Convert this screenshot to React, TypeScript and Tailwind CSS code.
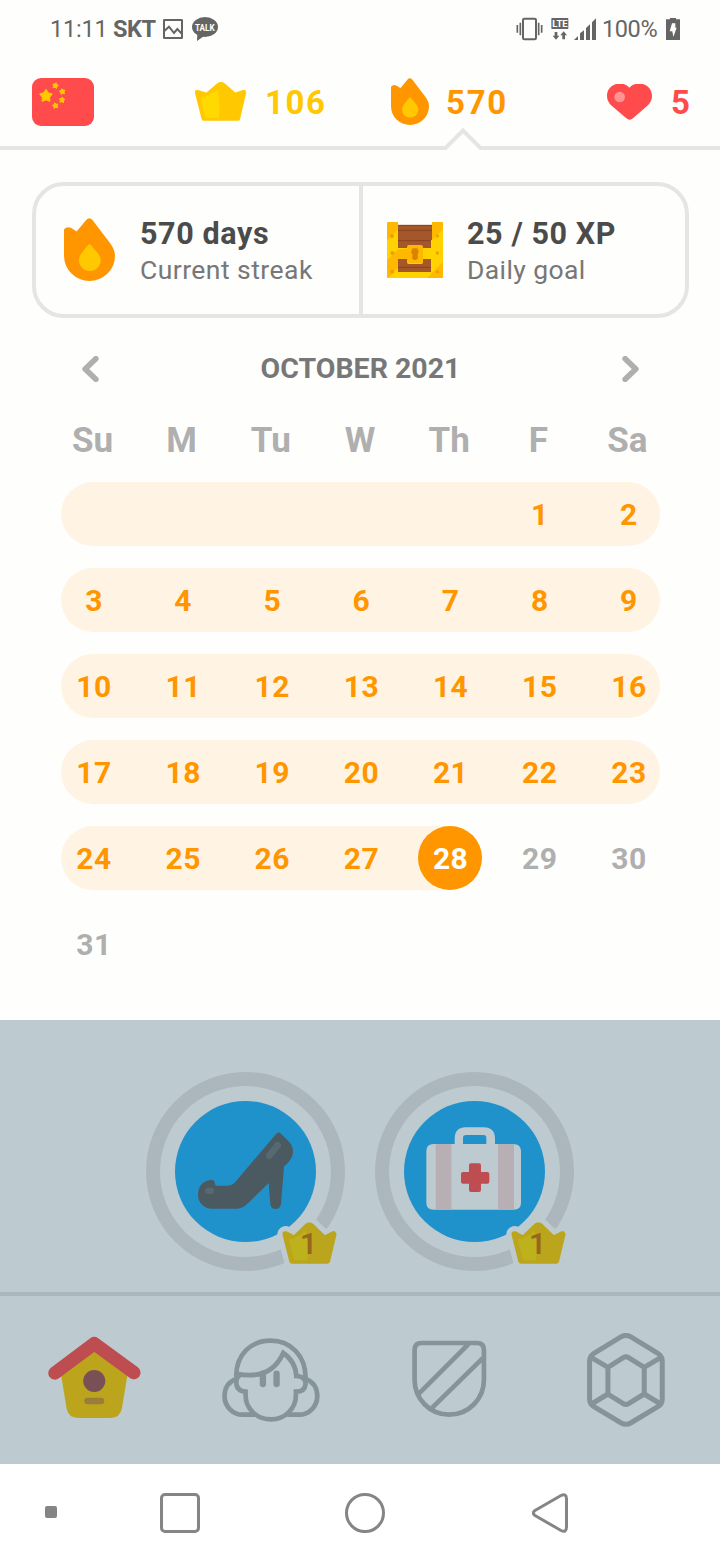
import React from "react";

const streakWeeks: (number | null)[][] = [
  [null, null, null, null, null, 1, 2],
  [3, 4, 5, 6, 7, 8, 9],
  [10, 11, 12, 13, 14, 15, 16],
  [17, 18, 19, 20, 21, 22, 23],
];
const weekdays = ["Su", "M", "Tu", "W", "Th", "F", "Sa"];

function Flame({ className }: { className: string }) {
  return (
    <svg className={className} viewBox="132 143 154 190" preserveAspectRatio="none">
      <path
        fill="#ff9600"
        d="M132 178Q136 171 146 171Q153 171 170 184L199 149Q208 139 218 149L272 220Q286 240 286 257A77 76 0 0 1 132 257Z"
      />
      <path
        fill="#ffc800"
        d="M204 225Q209 219 214 225L235 250Q243 261 243 270A33 33 0 0 1 177 270Q177 261 184 250Z"
      />
    </svg>
  );
}

function star(cx: number, cy: number, r: number, turn: number) {
  return Array.from({ length: 10 }, (_, i) => {
    const a = ((i * 36 - 90 + turn) * Math.PI) / 180;
    const d = i % 2 ? r * 0.58 : r;
    return `${cx + d * Math.cos(a)},${cy + d * Math.sin(a)}`;
  }).join(" ");
}

function StatusBar() {
  return (
    <div className="flex h-14 shrink-0 items-center pl-[50px] pr-10 pt-[2px] text-[#656565]">
      <span className="w-[63px] text-[23.5px] leading-7 tracking-[-0.2px]">11:11</span>
      <span className="w-[49px] text-[23.5px] font-bold leading-7 tracking-[-0.5px]">SKT</span>
      <svg className="ml-[1px] h-5 w-5" viewBox="489 54 60 60">
        <rect x="492" y="57" width="54" height="54" rx="1" fill="none" stroke="#656565" strokeWidth="6" />
        <path d="M492 91L507 77L522 96L532 84L546 99" fill="none" stroke="#656565" strokeWidth="6" />
      </svg>
      <svg className="ml-[9px] h-6 w-[26px]" viewBox="576 48 78 72">
        <ellipse cx="615" cy="78" rx="39" ry="30" fill="#656565" />
        <path d="M592 96L591 120L612 105Z" fill="#656565" />
        <text x="585" y="89" fontSize="27" fontWeight="700" fill="#fefefc" textLength="59" lengthAdjust="spacingAndGlyphs">TALK</text>
      </svg>
      <div className="flex-1" />
      <svg className="h-6 w-[27px]" viewBox="468 48 81 72">
        <rect x="489" y="53" width="39" height="62" rx="4" fill="none" stroke="#656565" strokeWidth="6" />
        <path d="M481 65V103M472 72V95M536 65V103M545 72V95" stroke="#656565" strokeWidth="5" />
      </svg>
      <svg className="ml-2 h-6 w-[18px]" viewBox="572 48 54 72">
        <rect x="573" y="51" width="51" height="33" rx="2" fill="#656565" />
        <text x="576" y="78" fontSize="29" fontWeight="700" fill="#fefefc" textLength="46" lengthAdjust="spacingAndGlyphs">LTE</text>
        <path d="M583 93H591V104H597L587 116L577 104H583ZM606 115H614V103H620L610 91L600 103H606Z" fill="#656565" />
      </svg>
      <svg className="ml-[5px] h-6 w-[22px]" viewBox="642 48 66 72">
        <path d="M642 117L654 105V117ZM660 117V97L672 88V117ZM678 117V81L690 70V117ZM696 117V64L708 52V117Z" fill="#656565" />
      </svg>
      <span className="ml-[6px] w-[64px] text-[23.5px] leading-7 tracking-[-0.4px]">100%</span>
      <svg className="h-6 w-[14px]" viewBox="918 48 42 72">
        <path d="M930 51H948V55H960V117H918V55H930Z" fill="#656565" />
        <path d="M936 67H946V80H950L940 108L937 91H929Z" fill="#fefefc" />
      </svg>
    </div>
  );
}

function Stats() {
  return (
    <div className="flex h-[70px] shrink-0 pl-8 pt-[22px] text-[33px] font-bold leading-[48px]">
      <svg className="h-12 w-[62px]" viewBox="96 234 186 144">
        <rect x="96" y="234" width="186" height="144" rx="27" fill="#ff4b4b" />
        <g fill="#ffc800" stroke="#ffc800" strokeWidth="3" strokeLinejoin="round">
          <polygon points={star(138, 288, 20, 0)} />
          <polygon points={star(166, 257, 9, 12)} />
          <polygon points={star(187, 275, 9, -10)} />
          <polygon points={star(186, 300, 9, 8)} />
          <polygon points={star(166, 317, 9, -12)} />
        </g>
      </svg>
      <svg className="ml-[101px] mt-1 h-[39px] w-[52px]" viewBox="584 246 156 117">
        <path
          d="M591 277L620 286L655 256Q662 251 669 256L703 286L730 277L712 355H611Z"
          fill="#ffc800"
          stroke="#ffc800"
          strokeWidth="15"
          strokeLinejoin="round"
        />
        <path d="M602 294Q630 284 652 270Q660 310 656 353H618Q614 353 613 348Z" fill="#ffd900" />
      </svg>
      <span className="ml-[18px] w-[72px] pt-[1px] tracking-[1.6px] text-[#ffc800]">106</span>
      <Flame className="ml-[54px] h-[47px] w-[38px]" />
      <span className="ml-[17px] w-[72px] pt-[1px] tracking-[1.7px] text-[#ff9600]">570</span>
      <svg className="ml-[89px] mt-[6px] h-9 w-[45px]" viewBox="741 252 135 108">
        <path
          d="M741 288C741 250 788 240 808 263C829 240 876 250 876 288Q876 305 862 317L819 355Q809 363 799 355L755 317Q741 305 741 288Z"
          fill="#ff4b4b"
        />
        <circle cx="779" cy="291" r="16" fill="#ff9393" />
      </svg>
      <span className="ml-[19px] pt-[1px] text-[#ff4b4b]">5</span>
    </div>
  );
}

function Chest() {
  return (
    <svg className="h-14 w-14" viewBox="111 156 168 168">
      <rect x="140" y="165" width="106" height="141" fill="#a5572a" />
      <path d="M140 166H246M140 181H246M140 212H246M140 292H246" stroke="#86431f" strokeWidth="3" />
      <path d="M111 160Q111 156 115 156H144V234H171V267H144V306H243V267H218V234H243V210H246V156H275Q279 156 279 160V320Q279 324 275 324H115Q111 324 111 320Z" fill="#ffd200" />
      <path d="M111 160Q111 156 115 156H144V178L111 211ZM246 156H275Q279 156 279 160V178L246 210ZM144 238L171 236V267H144V293L115 324Q111 324 111 320V271ZM279 276V320Q279 324 275 324H231Z" fill="#ffb800" />
      <rect x="171" y="225" width="48" height="57" rx="6" fill="#ffb800" />
      <path d="M172 272V276Q172 282 178 282H212Q218 282 218 276V272Q218 279 212 279H178Q172 279 172 272Z" fill="#ffd200" />
      <path d="M187 235H202L206 244L203 254V267L195 271L186 266L188 254L183 248Z" fill="#db8200" />
      <g fill="#f49b00">
        <circle cx="126" cy="198" r="6" /><circle cx="262" cy="198" r="5" />
        <circle cx="127" cy="249" r="6" /><circle cx="262" cy="249" r="5" />
        <circle cx="126" cy="305" r="6" /><circle cx="262" cy="305" r="5" />
      </g>
    </svg>
  );
}

function Summary() {
  return (
    <div className="ml-8 mt-8 flex h-[136px] w-[657px] shrink-0 rounded-[32px] border-4 border-[#e5e5e5]">
      <div className="flex w-[327px] border-r-4 border-[#e5e5e5] pl-7">
        <Flame className="mt-8 h-[63px] w-[51px]" />
        <div className="ml-[25px] mt-[29px]">
          <div className="whitespace-nowrap text-[30.5px] font-bold leading-[38px] tracking-[0.6px] text-[#4b4b4b]">570 days</div>
          <div className="whitespace-nowrap text-[26.5px] leading-[34px] tracking-[0.45px] text-[#777]">Current streak</div>
        </div>
      </div>
      <div className="flex pl-6">
        <div className="mt-9"><Chest /></div>
        <div className="ml-6 mt-[29px]">
          <div className="whitespace-nowrap text-[30.5px] font-bold leading-[38px] tracking-[0.6px] text-[#4b4b4b]">25 / 50 XP</div>
          <div className="whitespace-nowrap text-[26.5px] leading-[34px] tracking-[0.4px] text-[#777]">Daily goal</div>
        </div>
      </div>
    </div>
  );
}

function Day({ n }: { n: number | null }) {
  return <div className="flex h-16 w-16 shrink-0 items-center justify-center pl-[2px] pt-[1px] tracking-[0.5px]">{n}</div>;
}

function Calendar() {
  return (
    <div className="ml-[61px] flex w-[599px] flex-col">
      <div className="flex h-[101px] items-center justify-between px-[21px]">
        <svg className="h-[26px] w-[17px]" viewBox="128 48 50 78">
          <path d="M169 56L137 87L169 118" fill="none" stroke="#afafaf" strokeWidth="17" strokeLinecap="round" strokeLinejoin="round" />
        </svg>
        <div className="text-[28.5px] font-bold leading-[34px] text-[#777]">OCTOBER 2021</div>
        <svg className="h-[26px] w-[17px]" viewBox="785 48 50 78">
          <path d="M794 56L826 87L794 118" fill="none" stroke="#afafaf" strokeWidth="17" strokeLinecap="round" strokeLinejoin="round" />
        </svg>
      </div>
      <div className="flex h-[63px] gap-[25.17px] pt-[1px] text-[35px] font-bold leading-[42px] text-[#afafaf]">
        {weekdays.map((d) => (
          <div key={d} className="w-16 shrink-0 pr-[1px] text-center">{d}</div>
        ))}
      </div>
      <div className="flex flex-col gap-[22px] text-[30px] font-bold text-[#ff9600]">
        {streakWeeks.map((week, i) => (
          <div key={i} className="flex gap-[25.17px] rounded-full bg-[#fff4e4]">
            {week.map((n, j) => <Day key={j} n={n} />)}
          </div>
        ))}
        <div className="flex gap-[25.17px] text-[#afafaf]">
          <div className="flex gap-[25.17px] rounded-full bg-[#fff4e4] text-[#ff9600]">
            {[24, 25, 26, 27].map((n) => <Day key={n} n={n} />)}
            <div className="rounded-full bg-[#ff9600] text-white"><Day n={28} /></div>
          </div>
          <Day n={29} />
          <Day n={30} />
        </div>
        <div className="text-[#afafaf]"><Day n={31} /></div>
      </div>
    </div>
  );
}

function Skill({ children }: { children: React.ReactNode }) {
  const crown = "M467 523L493 537L531 500Q538 495 545 500L583 537L610 523L591 602H487Z";
  return (
    <svg className="h-[200px] w-[200px]" viewBox="48 36 600 600">
      <circle cx="346.500" cy="334.500" r="277.500" fill="none" stroke="#abb7bc" strokeWidth="42" />
      <circle cx="346.500" cy="334.500" r="211.500" fill="#2092cb" />
      {children}
      <path d={crown} fill="#bdcacf" stroke="#bdcacf" strokeWidth="50" strokeLinejoin="round" />
      <path d={crown} fill="#bba51c" stroke="#bba51c" strokeWidth="19" strokeLinejoin="round" />
      <path d="M477 538Q510 530 526 512Q540 555 531 601H501Q492 601 490 594Z" fill="#bdb21c" />
      <text x="536" y="582" textAnchor="middle" fontSize="90" fontWeight="600" fill="#99661d">1</text>
    </svg>
  );
}

function Skills() {
  return (
    <div className="flex h-[272px] shrink-0 gap-[29px] pl-[146px] pt-[52px]">
      <Skill>
        <path
          fill="#4b5a61"
          d="M439 221Q446 214 453 221L476 244Q490 259 489 278Q488 297 462 320L453 432Q451 447 436 447Q423 447 421 432L416 369L354 430Q338 446 322 446H246A41 41 0 0 1 204 405Q205 361 248 360Q254 361 255 374Q257 377 262 377H292Q305 377 314 368Z"
        />
        <path d="M418 287L443 256" stroke="#566970" strokeWidth="20" strokeLinecap="round" />
        <rect x="225" y="383" width="27" height="19" rx="9" fill="#566970" />
      </Skill>
      <Skill>
        <path
          d="M287 252V237Q287 202 320 202H374Q408 202 408 237V252H462Q486 252 486 274V428Q486 449 464 449H224Q202 449 202 428V274Q202 252 224 252ZM312 252H382V233Q382 225 374 225H321Q312 225 312 233Z"
          fill="#bdcacf"
          fillRule="evenodd"
        />
        <path d="M230 252H277V448H230ZM417 252H465V448H417Z" fill="#b8afb5" />
        <path
          d="M336 310H360Q366 310 366 316V336H385Q391 336 391 342V365Q391 371 385 371H366V390Q366 396 360 396H336Q330 396 330 390V371H312Q306 371 306 365V342Q306 336 312 336H330V316Q330 310 336 310Z"
          fill="#bd4d51"
        />
      </Skill>
    </div>
  );
}

function TabBar() {
  return (
    <div className="flex h-[172px] shrink-0 items-center border-t-4 border-[#abb7bc] px-[5px]">
      <div className="flex flex-1 justify-center">
        <svg className="h-[100px] w-[100px]" viewBox="41.250 150 300 300">
          <path d="M192 205L293 276L275 385Q270 414 240 414H144Q114 414 109 385L91 276Z" fill="#bca51c" />
          <path d="M74 279L192 191L311 278" fill="none" stroke="#bd4d51" strokeWidth="40" strokeLinecap="round" strokeLinejoin="round" />
          <circle cx="192" cy="303" r="33" fill="#785055" />
          <rect x="162" y="353" width="60" height="20" rx="10" fill="#9a7d37" />
        </svg>
      </div>
      <div className="flex flex-1 justify-center">
        <svg className="h-[100px] w-[100px]" viewBox="573.250 150 300 300" fill="none" stroke="#85939a" strokeWidth="14">
          <path d="M619 290C618 222 665 182 722 182C780 182 829 225 827 298" />
          <path d="M619 281C690 296 736 273 760 219Q798 246 799 288Q827 289 827 312Q825 335 798 335V346C798 386 765 418 723 418C680 418 647 386 647 346V335Q619 333 619 306Q619 291 630 286" />
          <path d="M620 296Q584 310 584 348A55 55 0 0 0 640 404H675M826 296Q862 310 862 348A55 55 0 0 1 806 404H772" />
          <path d="M699 281V312M740 281V312" strokeWidth="19" strokeLinecap="round" />
        </svg>
      </div>
      <div className="flex flex-1 justify-center">
        <svg className="h-[100px] w-[100px]" viewBox="56.250 150 300 300" fill="none" stroke="#85939a" strokeWidth="14">
          <path d="M124 189H290Q311 189 311 210V300A104 104 0 0 1 103 300V210Q103 189 124 189ZM265 192L116 341M310 232L153 386" />
        </svg>
      </div>
      <div className="flex flex-1 justify-center">
        <svg className="h-[100px] w-[100px]" viewBox="588.250 150 300 300" fill="none" stroke="#85939a" strokeWidth="15">
          <path d="M724 170Q738 163 752 170L834 220Q847 228 847 243V357Q847 372 834 380L752 429Q738 437 724 429L642 380Q629 372 629 357V243Q629 228 642 220Z" />
          <path d="M730 233Q738 228 746 233L793 262V342L746 371Q738 376 730 371L684 342V262ZM635 233L684 262M842 233L793 262M635 372L684 342M842 372L793 342" />
        </svg>
      </div>
    </div>
  );
}

function SystemNav() {
  return (
    <div className="flex h-24 shrink-0 items-start bg-white pl-[45px] pt-[29px]">
      <div className="mt-[13px] h-3 w-3 rounded-[2px] bg-[#858585]" />
      <div className="ml-[103px] h-10 w-10 rounded-[5px] border-[3px] border-[#858585]" />
      <div className="ml-[144.5px] h-10 w-10 rounded-full border-[3px] border-[#858585]" />
      <svg className="ml-[147px] h-10 w-[37px]" viewBox="0 0 37 40">
        <path d="M29 2.500L3 17.500Q-0.500 20 3 22.500L29 37.500Q34.500 40 34.500 34V6Q34.500 0 29 2.500Z" fill="none" stroke="#858585" strokeWidth="3" />
      </svg>
    </div>
  );
}

export default function App() {
  return (
    <div className="flex h-[1560px] w-[720px] flex-col overflow-hidden bg-[#fefefd] font-['Roboto','Liberation_Sans',sans-serif]">
      <StatusBar />
      <Stats />
      <svg className="h-6 w-[720px] shrink-0" viewBox="0 0 720 24">
        <path d="M0 22H445.500L463 4.500L480.500 22H720" fill="none" stroke="#e5e5e5" strokeWidth="4" />
      </svg>
      <Summary />
      <Calendar />
      <div className="mt-auto flex h-[444px] shrink-0 flex-col bg-[#bdcacf]">
        <Skills />
        <TabBar />
      </div>
      <SystemNav />
    </div>
  );
}
